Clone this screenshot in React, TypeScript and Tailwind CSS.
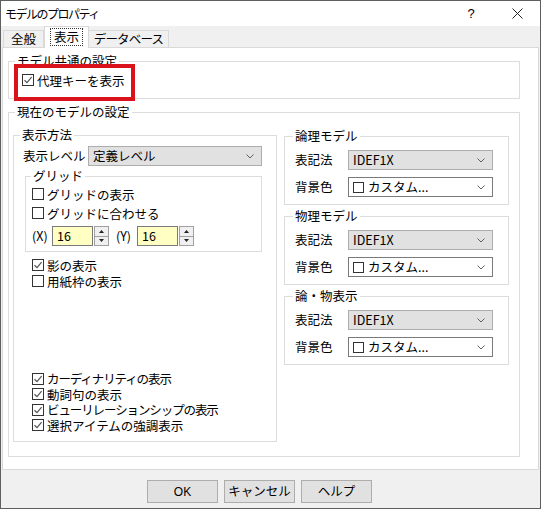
import React from 'react';

const FONT = "font-['Noto_Sans_CJK_JP','Noto_Sans',sans-serif]";

function Check({
  checked,
  label,
  className = '',
  narrow,
}: {
  checked?: boolean;
  label: string;
  className?: string;
  narrow?: boolean;
}) {
  return (
    <div className={`flex items-center ${className}`}>
      <span className="w-[12px] h-[12px] border border-[#333333] bg-white flex items-center justify-center shrink-0">
        {checked && (
          <svg width="10" height="10" viewBox="0 0 10 10">
            <path d="M1.5 5.2 L4 7.6 L8.6 2.2" fill="none" stroke="#555555" strokeWidth="1.2" />
          </svg>
        )}
      </span>
      <span className={`ml-[3px] whitespace-nowrap leading-[15px] ${narrow ? 'tracking-[-1.1px]' : ''}`}>
        {label}
      </span>
    </div>
  );
}

function Chevron() {
  return (
    <svg width="8" height="5" viewBox="0 0 8 5" className="shrink-0">
      <path d="M0.5 0.5 L4 4 L7.5 0.5" fill="none" stroke="#606060" strokeWidth="1" />
    </svg>
  );
}

function Combo({ value, gray, swatch, className = '' }: { value: string; gray?: boolean; swatch?: boolean; className?: string }) {
  return (
    <div
      className={`h-[20px] flex items-center border pl-[4px] pr-[7px] ${
        gray ? 'bg-[#e1e1e1] border-[#adadad]' : 'bg-white border-[#7a7a7a]'
      } ${className}`}
    >
      {swatch && <span className="w-[11px] h-[11px] border border-[#333333] bg-white mr-[4px] shrink-0" />}
      <span className="flex-1 whitespace-nowrap leading-[16px]">{value}</span>
      <Chevron />
    </div>
  );
}

function Spin() {
  return (
    <div className="w-[15px] h-[20px] flex flex-col ml-[1px]">
      <div className="flex-1 border border-[#a0a0a0] bg-[#f0f0f0] flex items-center justify-center">
        <svg width="5" height="3" viewBox="0 0 5 3"><path d="M0 3 L2.5 0 L5 3 Z" fill="#222222" /></svg>
      </div>
      <div className="flex-1 border border-t-0 border-[#a0a0a0] bg-[#f0f0f0] flex items-center justify-center">
        <svg width="5" height="3" viewBox="0 0 5 3"><path d="M0 0 L2.5 3 L5 0 Z" fill="#222222" /></svg>
      </div>
    </div>
  );
}

function Group({
  title,
  className = '',
  legendClass = 'ml-[6px]',
  children,
}: {
  title: string;
  className?: string;
  legendClass?: string;
  children: React.ReactNode;
}) {
  return (
    <fieldset className={`border border-[#dcdcdc] min-w-0 ${className}`}>
      <legend className={`px-[2px] leading-[16px] ${legendClass}`}>{title}</legend>
      {children}
    </fieldset>
  );
}

function ModelGroup({ title, className = '' }: { title: string; className?: string }) {
  return (
    <Group title={title} className={`pb-[7px] ${className}`} legendClass="ml-[8px]">
      <div className="flex items-center pl-[10px] mt-[6px]">
        <span className="w-[53px]">表記法</span>
        <Combo value="IDEF1X" gray className="w-[145px]" />
      </div>
      <div className="flex items-center pl-[10px] mt-[7px]">
        <span className="w-[53px]">背景色</span>
        <Combo value="カスタム..." swatch className="w-[145px]" />
      </div>
    </Group>
  );
}

export default function App() {
  return (
    <div className={`relative w-[541px] h-[509px] bg-white border border-[#5f5f5f] flex flex-col text-[12.5px] text-black ${FONT}`}>
      {/* title bar */}
      <div className="h-[25px] flex items-center bg-white">
        <span className="pl-[4px] text-[12px] tracking-[-1.5px]">モデルのプロパティ</span>
        <div className="ml-auto flex h-full">
          <div className="w-[46px] flex items-center justify-center text-[13px] font-['Liberation_Sans',sans-serif]">?</div>
          <div className="w-[46px] flex items-center justify-center">
            <svg width="11" height="11" viewBox="0 0 11 11">
              <path d="M0.5 0.5 L10.5 10.5 M10.5 0.5 L0.5 10.5" stroke="#222222" strokeWidth="1" />
            </svg>
          </div>
        </div>
      </div>

      <div className="flex-1 bg-[#f0f0f0] flex flex-col">
        {/* tabs */}
        <div className="h-[21px] flex items-end pl-[2px]">
          <div className="h-[17px] w-[41px] border border-b-0 border-[#d9d9d9] flex items-center justify-center">全般</div>
          <div className="relative z-10 h-[22px] -mb-[1px] w-[45px] bg-white border border-b-0 border-[#d9d9d9] flex items-start justify-center pt-[1px]">
            <span className="border border-dotted border-[#333333] px-[3px] leading-[16px]">表示</span>
          </div>
          <div className="h-[17px] w-[80px] border border-b-0 border-l-0 border-[#d9d9d9] flex items-center justify-center tracking-[-0.8px]">
            データベース
          </div>
        </div>

        {/* panel */}
        <div className="mx-[1px] h-[423px] bg-white border border-[#d9d9d9] flex flex-col">
          <Group title="モデル共通の設定" className="mt-[5px] ml-[5px] w-[512px] pb-[10px]">
            <Check checked label="代理キーを表示" className="h-[16px] mt-[3px] pl-[13px]" />
          </Group>

          <Group title="現在のモデルの設定" className="mt-[5px] ml-[5px] w-[512px] pb-[14px]">
            <div className="flex items-start pl-[4px] mt-[7px]">
              {/* left */}
              <Group title="表示方法" className="w-[264px] pb-[8px]">
                <div className="flex items-center pl-[9px] mt-[3px]">
                  <span className="w-[65px] whitespace-nowrap">表示レベル</span>
                  <Combo value="定義レベル" gray className="w-[174px]" />
                </div>
                <Group title="グリッド" className="ml-[11px] w-[237px] mt-[2px] pb-[5px]" legendClass="ml-[5px]">
                  <Check label="グリッドの表示" className="h-[16px] mt-[2px] pl-[6px]" />
                  <Check label="グリッドに合わせる" className="h-[16px] mt-[3px] pl-[6px]" />
                  <div className="flex items-center h-[20px] mt-[5px] pl-[6px]">
                    <span className="w-[20px]">(X)</span>
                    <div className="w-[41px] h-[20px] bg-[#ffffc4] border border-[#7a7a7a] flex items-center pl-[4px]">16</div>
                    <Spin />
                    <span className="ml-[7px] w-[21px]">(Y)</span>
                    <div className="w-[41px] h-[20px] bg-[#ffffc4] border border-[#7a7a7a] flex items-center pl-[4px]">16</div>
                    <Spin />
                  </div>
                </Group>
                <Check checked label="影の表示" className="h-[16px] mt-[5px] pl-[18px]" />
                <Check label="用紙枠の表示" className="h-[16px] pl-[18px]" />
                <div className="mt-[82px]">
                  <Check checked narrow label="カーディナリティの表示" className="h-[15.5px] pl-[18px]" />
                  <Check checked label="動詞句の表示" className="h-[15.5px] pl-[18px]" />
                  <Check checked narrow label="ビューリレーションシップの表示" className="h-[15.5px] pl-[18px]" />
                  <Check checked label="選択アイテムの強調表示" className="h-[15.5px] pl-[18px]" />
                </div>
              </Group>

              {/* right */}
              <div className="ml-[7px] w-[225px] flex flex-col mt-[1px]">
                <ModelGroup title="論理モデル" />
                <ModelGroup title="物理モデル" className="mt-[3px]" />
                <ModelGroup title="論・物表示" className="mt-[3px]" />
              </div>
            </div>
          </Group>
        </div>

        {/* buttons */}
        <div className="flex-1 flex items-start pt-[10px] pl-[146px] gap-[6px]">
          <button className="w-[71px] h-[23px] bg-[#e1e1e1] border border-[#adadad] flex items-center justify-center font-['Liberation_Sans',sans-serif] text-[12px]">OK</button>
          <button className="w-[71px] h-[23px] bg-[#e1e1e1] border border-[#adadad] flex items-center justify-center">キャンセル</button>
          <button className="w-[71px] h-[23px] bg-[#e1e1e1] border border-[#adadad] flex items-center justify-center">ヘルプ</button>
        </div>
      </div>

      {/* annotation highlight */}
      <div className="absolute left-[13px] top-[63px] w-[121px] h-[37px] border-[4px] border-[#d9121c] pointer-events-none" />
    </div>
  );
}
